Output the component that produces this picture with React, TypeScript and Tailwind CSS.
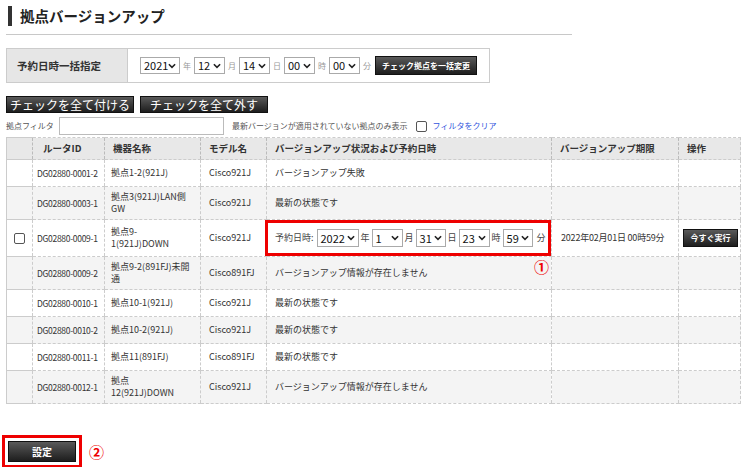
import React from 'react'

type Row = {
  id: string
  name: string[]
  model: string
  status: string
  limit?: string
  check?: boolean
  schedule?: boolean
  tall?: boolean
}

const rows: Row[] = [
  { id: 'DG02880-0001-2', name: ['拠点1-2(921J)'], model: 'Cisco921J', status: 'バージョンアップ失敗' },
  { id: 'DG02880-0003-1', name: ['拠点3(921J)LAN側', 'GW'], model: 'Cisco921J', status: '最新の状態です', tall: true },
  { id: 'DG02880-0009-1', name: ['拠点9-', '1(921J)DOWN'], model: 'Cisco921J', status: '', limit: '2022年02月01日 00時59分', check: true, schedule: true, tall: true },
  { id: 'DG02880-0009-2', name: ['拠点9-2(891FJ)未開', '通'], model: 'Cisco891FJ', status: 'バージョンアップ情報が存在しません', tall: true },
  { id: 'DG02880-0010-1', name: ['拠点10-1(921J)'], model: 'Cisco921J', status: '最新の状態です' },
  { id: 'DG02880-0010-2', name: ['拠点10-2(921J)'], model: 'Cisco921J', status: '最新の状態です' },
  { id: 'DG02880-0011-1', name: ['拠点11(891FJ)'], model: 'Cisco891FJ', status: '最新の状態です' },
  { id: 'DG02880-0012-1', name: ['拠点', '12(921J)DOWN'], model: 'Cisco921J', status: 'バージョンアップ情報が存在しません', tall: true },
]

function Chevron() {
  return (
    <svg width="8" height="6" viewBox="0 0 9 6" className="shrink-0">
      <path d="M1 1 L4.5 4.5 L8 1" fill="none" stroke="#222" strokeWidth="1.8" />
    </svg>
  )
}

function Sel({ value, w, h = 'h-[17px]' }: { value: string; w: string; h?: string }) {
  return (
    <span className={`inline-flex shrink-0 items-center justify-between border border-[#aaa] bg-white pl-[3px] pr-[3px] ${w} ${h} text-[11px] text-[#111] leading-none`}>
      <span>{value}</span>
      <Chevron />
    </span>
  )
}

function DarkButton({ children, className }: { children: React.ReactNode; className: string }) {
  return (
    <div className={`flex items-center justify-center whitespace-nowrap bg-gradient-to-b from-[#5a5a5a] to-[#1e1e1e] text-white border border-[#111] ${className}`}>
      {children}
    </div>
  )
}

function Circled({ n }: { n: string }) {
  return <span className="text-[15px] leading-none text-[#e00] font-bold">{n}</span>
}

const headers = ['', 'ルータID', '機器名称', 'モデル名', 'バージョンアップ状況および予約日時', 'バージョンアップ期限', '操作']

export default function App() {
  const td = 'border-y border-[#ccc] border-l border-l-[#ccc] border-dashed'
  return (
    <div className="w-[746px] h-[467px] bg-white text-[#333] overflow-hidden" style={{ fontFamily: '"Noto Sans CJK JP", "Noto Sans", sans-serif' }}>
      {/* Title */}
      <div className="pl-[8px] pt-[6px]">
        <div className="flex items-center gap-[8px] h-[20px]">
          <div className="w-[4px] h-[20px] bg-[#333]" />
          <h1 className="text-[14.5px] font-bold text-[#222] leading-none">拠点バージョンアップ</h1>
        </div>
      </div>
      <div className="ml-[6px] mt-[8px] w-[566px] border-b border-[#c8c8c8]" />

      {/* Batch date */}
      <div className="ml-[6px] mt-[13px] w-[484px] h-[35px] border border-[#ccc] flex">
        <div className="w-[121px] bg-[#e6e6e6] border-r border-[#ccc] flex items-center pl-[10px] text-[10.5px] font-bold text-[#333]">予約日時一括指定</div>
        <div className="flex items-center pl-[12px] text-[8px] text-[#999] whitespace-nowrap">
          <Sel value="2021" w="w-[40px]" />
          <span className="mx-[3px]">年</span>
          <Sel value="12" w="w-[31px]" />
          <span className="mx-[3px]">月</span>
          <Sel value="14" w="w-[31px]" />
          <span className="mx-[3px]">日</span>
          <Sel value="00" w="w-[31px]" />
          <span className="mx-[3px]">時</span>
          <Sel value="00" w="w-[31px]" />
          <span className="mx-[3px]">分</span>
          <DarkButton className="ml-[1px] w-[102px] h-[19px] text-[8px] font-bold">チェック拠点を一括変更</DarkButton>
        </div>
      </div>

      {/* Check buttons */}
      <div className="ml-[6px] mt-[13px] flex gap-[6px]">
        <DarkButton className="w-[128px] h-[17px] text-[12px]">チェックを全て付ける</DarkButton>
        <DarkButton className="w-[128px] h-[17px] text-[12px]">チェックを全て外す</DarkButton>
      </div>

      {/* Filter */}
      <div className="ml-[6px] mt-[4px] flex items-center h-[18px] text-[8px] text-[#555] whitespace-nowrap">
        <span className="w-[53px]">拠点フィルタ</span>
        <div className="w-[165px] h-[18px] border border-[#bbb] bg-white" />
        <span className="ml-[8px]">最新バージョンが適用されていない拠点のみ表示</span>
        <span className="ml-[8px] w-[11px] h-[11px] border border-[#555] rounded-[2px] bg-white" />
        <span className="ml-[6px] text-[#3355dd]">フィルタをクリア</span>
      </div>

      {/* Table */}
      <table className="ml-[6px] mt-[2px] w-[734px] table-fixed border-collapse text-[9px]">
        <colgroup>
          <col className="w-[26px]" />
          <col className="w-[72px]" />
          <col className="w-[96px]" />
          <col className="w-[66px]" />
          <col className="w-[285px]" />
          <col className="w-[127px]" />
          <col className="w-[62px]" />
        </colgroup>
        <thead>
          <tr className="h-[22px] bg-[#e8e8e8] text-[9.5px] text-[#333]">
            {headers.map((h, i) => (
              <th
                key={i}
                className={`text-left font-bold whitespace-nowrap border-t border-b border-[#ccc] ${i === 0 ? 'border-l border-l-[#ccc]' : 'border-l border-l-[#bbb] border-dashed'} ${i === 6 ? 'border-r border-r-[#ccc]' : ''} ${i === 1 ? 'pl-[10px]' : 'pl-[8px]'}`}
              >
                {h}
              </th>
            ))}
          </tr>
        </thead>
        <tbody>
          {rows.map((r, idx) => (
            <tr key={r.id} className={`${r.schedule ? 'h-[37px]' : r.tall ? 'h-[33px]' : 'h-[27px]'} ${idx % 2 === 1 ? 'bg-[#f4f4f4]' : 'bg-white'}`}>
              <td className="border border-[#ccc] border-r-0 text-center">
                {r.check && <span className="inline-block align-middle w-[11px] h-[11px] border border-[#555] rounded-[2px] bg-white" />}
              </td>
              <td className={`${td} pl-[4px] text-[8.5px] whitespace-nowrap tracking-[-0.3px]`}>{r.id}</td>
              <td className={`${td} pl-[6px] pr-[2px] leading-[12px] whitespace-nowrap`}>
                {r.name.map((n, i) => <div key={i}>{n}</div>)}
              </td>
              <td className={`${td} pl-[8px]`}>{r.model}</td>
              <td className={`relative ${td} pl-[8px]`}>
                {r.schedule ? (
                  <>
                    <div className="flex items-center whitespace-nowrap text-[9px] text-[#444]">
                      <span className="mr-[3px]">予約日時:</span>
                      <Sel value="2022" w="w-[42px]" h="h-[18px]" />
                      <span className="mx-[2px]">年</span>
                      <Sel value="1" w="w-[31px]" h="h-[18px]" />
                      <span className="mx-[2px]">月</span>
                      <Sel value="31" w="w-[30px]" h="h-[18px]" />
                      <span className="mx-[2px]">日</span>
                      <Sel value="23" w="w-[31px]" h="h-[18px]" />
                      <span className="mx-[2px]">時</span>
                      <Sel value="59" w="w-[30px]" h="h-[18px]" />
                      <span className="ml-[4px]">分</span>
                    </div>
                    <div className="absolute left-[-2px] right-0 top-0 bottom-0 border-[3px] border-[#ee0000] pointer-events-none" />
                    <div className="absolute right-[2px] bottom-[-20px]"><Circled n="①" /></div>
                  </>
                ) : (
                  <span className="whitespace-nowrap">{r.status}</span>
                )}
              </td>
              <td className={`${td} pl-[9px] whitespace-nowrap tracking-[-0.2px]`}>{r.limit}</td>
              <td className="border border-[#ccc] border-l-[#ccc] border-dashed pl-[4px]">
                {r.schedule && <DarkButton className="w-[55px] h-[18px] text-[8px] font-bold">今すぐ実行</DarkButton>}
              </td>
            </tr>
          ))}
        </tbody>
      </table>

      {/* Submit */}
      <div className="ml-[2px] mt-[31px] flex items-center gap-[7px]">
        <div className="border-[3px] border-[#ee0000] p-[3px] w-[80px] h-[33px]">
          <DarkButton className="w-full h-full text-[10px] font-bold">設定</DarkButton>
        </div>
        <Circled n="②" />
      </div>
    </div>
  )
}
